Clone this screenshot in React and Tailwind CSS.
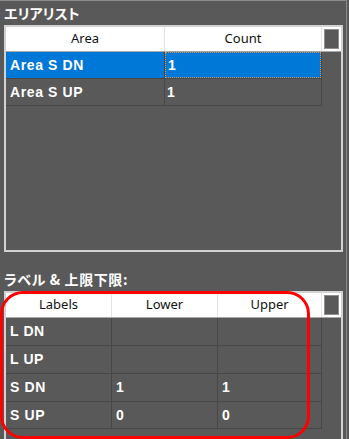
import React from "react";

const jp = "font-['Noto_Sans_CJK_JP',sans-serif] font-bold text-white [font-feature-settings:'palt']";
const cellFont = "font-['Liberation_Sans',sans-serif] font-bold text-[14px] tracking-[0.6px] text-white";
const headFont = "font-['Noto_Sans',sans-serif] text-[13px] text-[#111111]";

const HeaderCell = ({ w, children }) => (
  <div className={`${w} h-full flex items-center justify-center border-r border-[#e3e3e3] ${headFont}`}>
    {children}
  </div>
);

const Corner = () => (
  <div className="flex-1 h-full p-[2px] bg-white">
    <div className="w-full h-full bg-[#595959] border border-[#8e8e8e]"></div>
  </div>
);

const Cell = ({ w, children, className = "" }) => (
  <div className={`${w} h-full flex items-center pl-[4px] border-r border-b border-[#474747] ${cellFont} ${className}`}>
    {children}
  </div>
);

const areaRows = [
  { area: "Area S DN", count: "1", selected: true },
  { area: "Area S UP", count: "1" },
];

const limitRows = [
  { label: "L DN", lower: "", upper: "", h: "h-[28px]" },
  { label: "L UP", lower: "", upper: "", h: "h-[28px]" },
  { label: "S DN", lower: "1", upper: "1", h: "h-[28px]" },
  { label: "S UP", lower: "0", upper: "0", h: "h-[27px]" },
];

export default function App() {
  return (
    <div className="w-[349px] h-[439px] bg-[#595959] overflow-hidden relative">
      <div className="h-full mr-[2px] border-t border-r border-[#8a8a8a]">
        {/* Area list */}
        <div className={`h-[24px] pl-[4px] pt-[2px] text-[14px] leading-[20px] ${jp}`}>エリアリスト</div>
        <div className="ml-[4px] w-[339px] h-[227px] border-2 border-[#d2d2d2] flex flex-col">
          <div className="h-[25px] flex bg-white border-b border-[#a8a8a8]">
            <HeaderCell w="w-[159px]">Area</HeaderCell>
            <HeaderCell w="w-[157px]">Count</HeaderCell>
            <Corner />
          </div>
          {areaRows.map((r) => (
            <div key={r.area} className="h-[27px] flex">
              <Cell w="w-[159px]" className={r.selected ? "bg-[#0078d7]" : ""}>
                {r.area}
              </Cell>
              <div className={`w-[157px] h-full border-r border-b border-[#474747] ${r.selected ? "bg-[#0078d7]" : ""}`}>
                <div
                  className={`w-full h-full flex items-center pl-[2px] ${cellFont} ${
                    r.selected ? "border border-dotted border-[#e8913a]" : ""
                  }`}
                >
                  {r.count}
                </div>
              </div>
            </div>
          ))}
        </div>

        {/* Labels & limits */}
        <div className={`h-[39px] pl-[4px] pt-[18px] text-[14px] leading-[18px] tracking-[0.6px] ${jp}`}>
          ラベル&nbsp;&amp;&nbsp;上限下限:
        </div>
        <div className="ml-[4px] w-[339px] h-[170px] border-2 border-[#d2d2d2] flex flex-col">
          <div className="h-[25px] flex bg-white border-b border-[#a8a8a8]">
            <HeaderCell w="w-[106px]">Labels</HeaderCell>
            <HeaderCell w="w-[106px]">Lower</HeaderCell>
            <HeaderCell w="w-[104px]">Upper</HeaderCell>
            <Corner />
          </div>
          {limitRows.map((r) => (
            <div key={r.label} className={`${r.h} flex`}>
              <Cell w="w-[106px]">{r.label}</Cell>
              <Cell w="w-[106px]">{r.lower}</Cell>
              <Cell w="w-[104px]">{r.upper}</Cell>
            </div>
          ))}
        </div>
      </div>

      {/* red annotation */}
      <div className="absolute left-0 top-[291px] w-[310px] h-[148px] border-[3px] border-[#ff0000] rounded-[23px] pointer-events-none"></div>
    </div>
  );
}
